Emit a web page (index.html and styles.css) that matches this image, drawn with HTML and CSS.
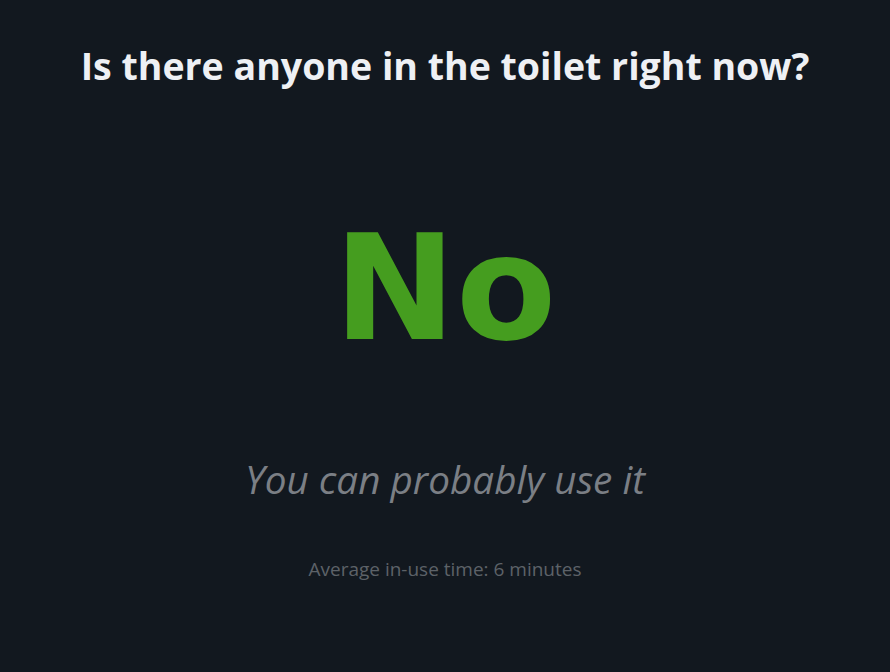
FILE: index.html
```html
<!DOCTYPE html>
<html>
<head>
<meta charset="utf-8">
<link rel="stylesheet" href="styles.css">
</head>
<body>
<main class="page">
  <h1 class="question">Is there anyone in the toilet right now?</h1>
  <div class="answer">No</div>
  <p class="advice">You can probably use it</p>
  <p class="average">Average in-use time: 6 minutes</p>
</main>
</body>
</html>
```
FILE: styles.css
```css
html, body {
  margin: 0;
  padding: 0;
  background: #12181f;
  height: 100%;
}
.page {
  display: flex;
  flex-direction: column;
  align-items: center;
  font-family: "Open Sans", "Noto Sans", sans-serif;
}
.question {
  margin: 42px 0 0;
  font-size: 37.5px;
  font-weight: 700;
  color: #eef0f4;
  line-height: 48px;
  white-space: nowrap;
}
.answer {
  margin-top: 118px;
  font-family: "DejaVu Sans", sans-serif;
  font-weight: 700;
  font-size: 146px;
  line-height: 160px;
  color: #459d1f;
}
.advice {
  margin: 87px 0 0;
  font-style: italic;
  font-size: 38.7px;
  line-height: 48px;
  color: #7b7f85;
}
.average {
  margin: 54px 0 0;
  font-size: 19px;
  line-height: 24px;
  color: #5d6268;
}
```
